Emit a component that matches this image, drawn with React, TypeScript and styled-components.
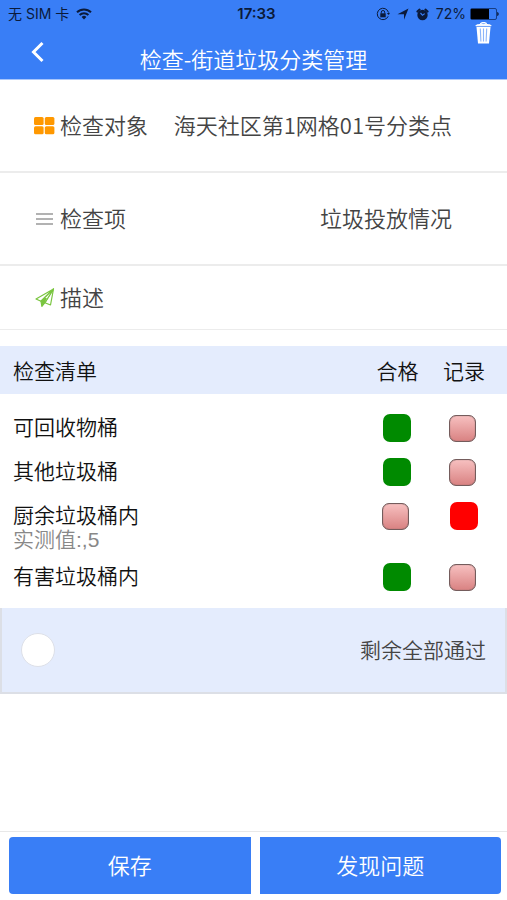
import React, { useState } from "react";
import styled, { createGlobalStyle } from "styled-components";

const BLUE = "#397ef6";
const PANEL = "#e4ecfd";

const GlobalStyle = createGlobalStyle`
  *, *::before, *::after { box-sizing: border-box; }
  body {
    margin: 0;
    background: #fff;
    color: #111;
    font-family: "Noto Sans CJK SC", "Noto Sans", sans-serif;
    font-weight: 350;
  }
  button, input { font: inherit; margin: 0; }
`;

const Page = styled.div`
  min-height: 100vh;
  display: flex;
  flex-direction: column;
`;

const Header = styled.header`
  background: ${BLUE};
  border-bottom: 1px solid #a9c6fb;
`;

const StatusBar = styled.div`
  display: grid;
  grid-template-columns: 1fr auto 1fr;
  align-items: center;
  height: 22px;
  padding: 6px 8px 0;
  color: #0b1a3a;
  font-family: Inter, "Noto Sans CJK SC", sans-serif;
  font-size: 14px;
  font-weight: 400;
  line-height: 16px;
`;

const StatusGroup = styled.div<{ $end?: boolean }>`
  display: flex;
  align-items: center;
  gap: 7px;
  justify-content: ${(p) => (p.$end ? "flex-end" : "flex-start")};
`;

const Charge = styled.span`
  display: flex;
  align-items: center;
  gap: 4px;
`;

const Clock = styled.time`
  padding-left: 6px;
  font-size: 15px;
  font-weight: 600;
`;

const NavBar = styled.div`
  display: grid;
  grid-template-columns: 76px 1fr 76px;
  height: 57px;
`;

const NavButton = styled.button<{ $end?: boolean }>`
  display: flex;
  align-items: flex-start;
  justify-content: ${(p) => (p.$end ? "flex-end" : "flex-start")};
  padding: ${(p) => (p.$end ? "0 15px 0 0" : "19px 0 0 31px")};
  border: 0;
  background: none;
  color: #fff;
`;

const Title = styled.h1`
  margin: 0;
  padding-top: 20px;
  color: #fff;
  font-size: 22px;
  font-weight: 350;
  line-height: 32px;
  text-align: center;
  white-space: nowrap;
`;

const Field = styled.section<{ $compact?: boolean }>`
  display: flex;
  align-items: center;
  justify-content: space-between;
  min-height: ${(p) => (p.$compact ? 64 : 93)}px;
  padding: 0 55px 0 33px;
  border-bottom: ${(p) => (p.$compact ? 1 : 2)}px solid #ececec;
  color: #444;
  font-size: 22px;
  line-height: 32px;
  white-space: nowrap;
`;

const FieldLabel = styled.div`
  display: flex;
  align-items: center;
  gap: 5px;
`;

const FieldText = styled.span`
  padding-bottom: 4px;
`;

const Checklist = styled.table`
  width: 100%;
  margin-top: 16px;
  border-collapse: collapse;
  table-layout: fixed;
  font-size: 21px;
  line-height: 24px;
`;

const HeadCell = styled.th<{ $width?: number }>`
  width: ${(p) => (p.$width ? `${p.$width}px` : "auto")};
  height: 48px;
  padding: 0;
  background: ${PANEL};
  font-weight: 350;
  text-align: center;

  &:first-child { padding-left: 13px; text-align: left; }
  &:last-child { padding-right: 10px; }
`;

const Items = styled.tbody`
  &::before {
    content: "";
    display: table-row;
    height: 12px;
  }
`;

const ItemName = styled.th`
  height: 44px;
  padding: 8px 0 3px 13px;
  font-weight: 350;
  text-align: left;
  vertical-align: top;
`;

const Note = styled.div`
  padding-top: 2px;
  color: #888;
  font-family: "Liberation Sans", "Noto Sans CJK SC", sans-serif;
`;

const BoxCell = styled.td`
  padding: 8px 0 0;
  text-align: center;
  vertical-align: top;

  &:last-child { padding-right: 10px; }
`;

const Box = styled.input<{ $tone: string }>`
  appearance: none;
  display: block;
  width: 27px;
  height: 27px;
  margin: 1px auto 0 18px;
  border: 1px solid #745c5c;
  border-radius: 7px;
  background: linear-gradient(#f7c0c0, #d98282);
  box-shadow: inset 0 0 1px #745c5c;

  &:checked {
    width: 28px;
    height: 28px;
    margin: 0 auto 0 19px;
    border: 0;
    background: ${(p) => p.$tone};
    box-shadow: none;
  }
`;

const PassAll = styled.label`
  display: flex;
  align-items: center;
  justify-content: space-between;
  min-height: 86px;
  margin-top: 9px;
  padding: 0 19px;
  border: 2px solid #dcdfe6;
  border-top: 0;
  background: ${PANEL};
  color: #444;
  font-size: 21px;
`;

const PassAllText = styled.span`
  padding-bottom: 2px;
`;

const Round = styled.input`
  appearance: none;
  width: 34px;
  height: 34px;
  border: 1px solid #dde0e8;
  border-radius: 50%;
  background: #fff;

  &:checked { background: ${BLUE}; }
`;

const Footer = styled.footer`
  display: grid;
  grid-template-columns: 1fr 1fr;
  gap: 9px;
  margin-top: auto;
  padding: 5px 6px 6px 9px;
  border-top: 1px solid #e8e8e8;
`;

const Action = styled.button`
  height: 57px;
  padding: 0 0 4px;
  border: 0;
  background: ${BLUE};
  color: #fff;
  font-size: 22px;

  &:first-child { border-radius: 4px 0 0 4px; }
  &:last-child { border-radius: 0 4px 4px 0; }
`;

const WifiIcon = () => (
  <svg width="16" height="12" viewBox="0 0 16 12" fill="none" stroke="currentColor" strokeWidth="2">
    <path d="M1 4.3a10 10 0 0 1 14 0M3.6 7a6.3 6.3 0 0 1 8.8 0" />
    <path d="M8 11.5 5.6 9a3.4 3.4 0 0 1 4.8 0z" fill="currentColor" stroke="none" />
  </svg>
);

const LockIcon = () => (
  <svg width="14" height="14" viewBox="0 0 14 14" fill="none" stroke="currentColor">
    <path d="M12.2 9.3A5.7 5.7 0 1 1 12.5 5.5" />
    <path d="m10.8 6.3 2 1.6 1.2-2.2z" fill="currentColor" stroke="none" />
    <rect x="4.3" y="6.3" width="5.4" height="4" fill="currentColor" stroke="none" />
    <path d="M5.3 6.5V5.2a1.7 1.7 0 0 1 3.4 0v1.3" />
  </svg>
);

const LocationIcon = () => (
  <svg width="12" height="12" viewBox="0 0 12 12" fill="currentColor">
    <path d="M11.5.5 7 11.7V6.2H.5z" />
  </svg>
);

const AlarmIcon = () => (
  <svg width="13" height="13" viewBox="0 0 13 13">
    <circle cx="6.5" cy="7" r="5.2" fill="currentColor" />
    <path d="M1.4 3.6 3.6 1.6M11.6 3.6 9.4 1.6" stroke="currentColor" strokeWidth="2" strokeLinecap="round" />
    <path d="M4.5 5 6.5 7.3 8.7 5.6" fill="none" stroke={BLUE} strokeWidth="1.2" />
  </svg>
);

const BatteryIcon = () => (
  <svg width="29" height="12" viewBox="0 0 29 12">
    <rect x=".5" y=".5" width="26" height="11" rx="1.5" fill="none" stroke="#173d83" strokeWidth="1" />
    <rect x="1" y="1" width="18" height="10" fill="#000" />
    <path d="M27.2 4c2 .5 2 3.5 0 4z" fill="#0b1a3a" />
  </svg>
);

const BackIcon = () => (
  <svg width="13" height="22" viewBox="0 0 13 22" fill="none" stroke="currentColor" strokeWidth="3">
    <path d="M11.5 2 2.5 11l9 9" />
  </svg>
);

const TrashIcon = () => (
  <svg width="17" height="22" viewBox="0 0 17 22" fill="none" stroke="currentColor">
    <path d="M5.5 2.5C5.5 0 11.5 0 11.5 2.5" strokeWidth="1.4" />
    <path d="M.8 3.8c0-2 15.4-2 15.4 0z" fill="currentColor" />
    <path d="M1.5 5h14L14 21.5H3z" fill="currentColor" stroke="none" />
    <path d="m5.3 6.5.6 13M8.5 6.5v13M11.7 6.5l-.6 13" stroke="#8db5fa" strokeWidth="1.1" />
  </svg>
);

const GridIcon = () => (
  <svg width="22" height="19" viewBox="0 0 22 19" fill="#ff9800">
    <rect x="1" y="1" width="9.6" height="8" rx="1.5" />
    <rect x="11.8" y="1" width="9.6" height="8" rx="1.5" />
    <rect x="1" y="10.3" width="9.6" height="8" rx="1.5" />
    <rect x="11.8" y="10.3" width="9.6" height="8" rx="1.5" />
  </svg>
);

const LinesIcon = () => (
  <svg width="22" height="14" viewBox="0 0 22 14" fill="none" stroke="#999" strokeWidth="1.4">
    <path d="M3 2h17M3 7h17M3 12h17" />
  </svg>
);

const PlaneIcon = () => (
  <svg width="22" height="22" viewBox="0 0 22 22" fill="none" stroke="#79c53f" strokeWidth="1.2" strokeLinejoin="round">
    <path d="M20.5 2 3 12l5 2.300zM20.5 2l-3 16-5.600-2.300z" />
    <path d="M8 14.3 20.5 2l-8.6 13.7-3 3.6z" fill="#fff" />
    <path d="m8 14.3.9 5 3-3.6 2-4.7-2.4-.3z" fill="#79c53f" stroke="none" />
  </svg>
);

type Item = { name: string; note?: string; pass: boolean; record: boolean };

const initialItems: Item[] = [
  { name: "可回收物桶", pass: true, record: false },
  { name: "其他垃圾桶", pass: true, record: false },
  { name: "厨余垃圾桶内", note: "实测值:,5", pass: false, record: true },
  { name: "有害垃圾桶内", pass: true, record: false },
];

export default function App() {
  const [items, setItems] = useState(initialItems);
  const choose = (index: number, pass: boolean) =>
    setItems((list) => list.map((it, i) => (i === index ? { ...it, pass, record: !pass } : it)));

  return (
    <Page>
      <GlobalStyle />
      <Header>
        <StatusBar>
          <StatusGroup>
            <span>无 SIM 卡</span>
            <WifiIcon />
          </StatusGroup>
          <Clock>17:33</Clock>
          <StatusGroup $end>
            <LockIcon />
            <LocationIcon />
            <AlarmIcon />
            <Charge>
              72%
              <BatteryIcon />
            </Charge>
          </StatusGroup>
        </StatusBar>
        <NavBar>
          <NavButton type="button" aria-label="返回"><BackIcon /></NavButton>
          <Title>检查-街道垃圾分类管理</Title>
          <NavButton type="button" aria-label="删除" $end><TrashIcon /></NavButton>
        </NavBar>
      </Header>

      <main>
        <Field>
          <FieldLabel><GridIcon /><FieldText>检查对象</FieldText></FieldLabel>
          <FieldText>海天社区第1网格01号分类点</FieldText>
        </Field>
        <Field>
          <FieldLabel><LinesIcon /><FieldText>检查项</FieldText></FieldLabel>
          <FieldText>垃圾投放情况</FieldText>
        </Field>
        <Field $compact>
          <FieldLabel><PlaneIcon /><FieldText>描述</FieldText></FieldLabel>
        </Field>

        <Checklist>
          <thead>
            <tr>
              <HeadCell scope="col">检查清单</HeadCell>
              <HeadCell scope="col" $width={67}>合格</HeadCell>
              <HeadCell scope="col" $width={76}>记录</HeadCell>
            </tr>
          </thead>
          <Items>
            {items.map((item, i) => (
              <tr key={item.name}>
                <ItemName scope="row">
                  {item.name}
                  {item.note && <Note>{item.note}</Note>}
                </ItemName>
                <BoxCell>
                  <Box type="checkbox" $tone="#008a00" aria-label={`${item.name} 合格`}
                    checked={item.pass} onChange={() => choose(i, true)} />
                </BoxCell>
                <BoxCell>
                  <Box type="checkbox" $tone="#ff0000" aria-label={`${item.name} 记录`}
                    checked={item.record} onChange={() => choose(i, false)} />
                </BoxCell>
              </tr>
            ))}
          </Items>
        </Checklist>

        <PassAll>
          <Round type="checkbox" />
          <PassAllText>剩余全部通过</PassAllText>
        </PassAll>
      </main>

      <Footer>
        <Action type="button">保存</Action>
        <Action type="button">发现问题</Action>
      </Footer>
    </Page>
  );
}
